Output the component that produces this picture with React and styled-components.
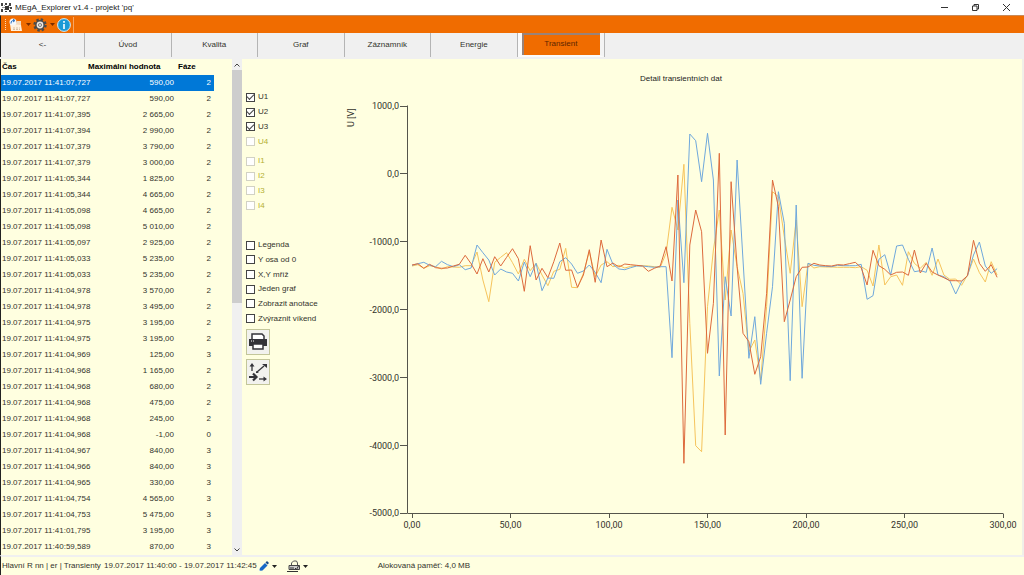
import React, { useState } from 'react';
import styled, { createGlobalStyle } from 'styled-components';

const GlobalStyle = createGlobalStyle`
    * {
        box-sizing: border-box;
    }

    body {
        margin: 0;
        background: #ffffe0;
        color: #33332c;
        font: 8px/16px 'Liberation Sans', sans-serif;
    }

    button, input {
        margin: 0;
        padding: 0;
        font: inherit;
        color: inherit;
    }

    svg {
        display: block;
    }
`

const Window = styled.div`
    display: flex;
    flex-direction: column;
    min-height: 100vh;
`

const TitleBar = styled.header`
    display: flex;
    align-items: center;
    height: 15px;
    padding: 0 2px 0 1px;
    background: #fff;

    h1 {
        flex: 1;
        margin: 0 0 0 3px;
        font-size: 8px;
        font-weight: normal;
        line-height: 15px;
        color: #222;
    }
`

const WindowButton = styled.button`
    display: flex;
    align-items: center;
    justify-content: center;
    width: 31px;
    height: 15px;
    border: 0;
    background: none;
`

const ToolBar = styled.div`
    display: flex;
    align-items: center;
    height: 18px;
    padding-left: 4px;
    border-top: 1px solid #c98a58;
    border-left: 1px solid #222;
    background: #f06c00;
`

const Grip = styled.span`
    height: 11px;
    margin-right: 3px;
    border-left: 1px dotted #ffd9b5;
`

const ToolButton = styled.button`
    display: flex;
    align-items: center;
    gap: 3px;
    margin-right: 2px;
    border: 0;
    background: none;
`

const ToolEnd = styled.span`
    height: 16px;
    border-left: 1px solid #f7a562;
`

const TabBar = styled.div`
    height: 26px;
    background: #f0f0f0;
`

const Tabs = styled.nav`
    display: grid;
    grid-template-columns: 84px repeat(6, 1fr);
    width: 59%;
    height: 24px;
    border-left: 1px solid #222;
`

const Tab = styled.button`
    border: 0;
    border-right: 1px solid #b4b4b4;
    background: #f0f0f0;

    &[aria-current='page'] {
        border: 4px solid #fafafa;
        border-width: 0 4px 2px 4px;
        border-right: 4px solid #f4f4f4;
        background: #f06c00;
        box-shadow: inset 2px 2px 0 #98837a, 1px 0 0 #b4b4b4;
        color: #5c2500;
    }
`

const Content = styled.main`
    display: flex;
    flex: 1;
    border-left: 1px solid #222;
    border-right: 2px solid #f0f0e8;
`

const ListPane = styled.section`
    display: flex;
    justify-content: space-between;
    width: 241px;
`

const Records = styled.table`
    width: 213px;
    table-layout: fixed;
    border-collapse: collapse;
    align-self: flex-start;

    th, td {
        height: 16px;
        padding: 0 3px 0 1px;
        text-align: right;
        line-height: 16px;
        white-space: nowrap;
    }

    th {
        padding-right: 0;
        text-align: left;
        color: #000;
    }

    td:first-child {
        padding-right: 0;
        text-align: left;
    }
`

const Row = styled.tr`
    background: ${props => props.$selected ? '#0078d7' : 'transparent'};
    color: ${props => props.$selected ? '#fff' : 'inherit'};
`

const ScrollBar = styled.div`
    display: flex;
    flex-direction: column;
    align-items: center;
    width: 10px;
    background: #f0f0f0;

    svg {
        margin: 4px 0 3px;
    }
`

const Thumb = styled.div`
    width: 100%;
    height: 47%;
    background: #cdcdcd;
`

const Spacer = styled.div`
    flex: 1;
`

const Options = styled.aside`
    width: 78px;
    padding: 31px 0 0 4px;
`

const CheckGroup = styled.fieldset`
    display: grid;
    grid-auto-rows: 1fr;
    height: ${props => props.$height}px;
    margin: 0 0 ${props => props.$gap}px;
    padding: 0;
    border: 0;
`

const Check = styled.label`
    display: flex;
    align-items: center;
    gap: 3px;
    white-space: nowrap;
    line-height: 12px;
    color: ${props => props.$off ? '#b5b032' : 'inherit'};

    input {
        display: grid;
        place-items: center;
        appearance: none;
        width: 9px;
        height: 9px;
        border: 1px solid ${props => props.$off ? '#d2d2c4' : '#444'};
        background: #fff;
    }

    input:checked::after {
        content: '';
        width: 6px;
        height: 3px;
        border: solid #444;
        border-width: 0 0 1px 1px;
        transform: translateY(-1px) rotate(-45deg);
    }
`

const IconButton = styled.button`
    display: flex;
    align-items: center;
    justify-content: center;
    width: 24px;
    height: 26px;
    margin-bottom: 4px;
    border: 1px solid #c3c69a;
    background: #f2f2ee;
`

const Plot = styled.section`
    flex: 1;
    min-width: 0;

    svg {
        width: 100%;
        height: auto;
    }

    .label {
        font-family: Roboto, 'Liberation Sans', sans-serif;
        font-size: 9px;
        fill: #33332c;
    }

    .title {
        font-size: 8px;
        fill: #22221c;
    }

    .axis {
        fill: none;
        stroke: #55554c;
    }
`

const StatusBar = styled.footer`
    display: flex;
    align-items: center;
    height: 20px;
    padding-left: 1px;
    border-top: 2px solid #f0f0f0;
    border-left: 1px solid #222;
    line-height: 18px;
    white-space: nowrap;
`

const Place = styled.span`
    min-width: 100px;
    margin-right: 2px;
`

const StatusButton = styled.button`
    display: flex;
    align-items: center;
    gap: 3px;
    margin-left: ${props => props.$gap}px;
    border: 0;
    background: none;
`

const Memory = styled.span`
    margin-left: 70px;
`

const tabs = ['<-', 'Úvod', 'Kvalita', 'Graf', 'Záznamník', 'Energie', 'Transient'];

const records = [
    ['11:41:07,727', '590,00', 2],
    ['11:41:07,727', '590,00', 2],
    ['11:41:07,395', '2 665,00', 2],
    ['11:41:07,394', '2 990,00', 2],
    ['11:41:07,379', '3 790,00', 2],
    ['11:41:07,379', '3 000,00', 2],
    ['11:41:05,344', '1 825,00', 2],
    ['11:41:05,344', '4 665,00', 2],
    ['11:41:05,098', '4 665,00', 2],
    ['11:41:05,098', '5 010,00', 2],
    ['11:41:05,097', '2 925,00', 2],
    ['11:41:05,033', '5 235,00', 2],
    ['11:41:05,033', '5 235,00', 2],
    ['11:41:04,978', '3 570,00', 2],
    ['11:41:04,978', '3 495,00', 2],
    ['11:41:04,975', '3 195,00', 2],
    ['11:41:04,975', '3 195,00', 2],
    ['11:41:04,969', '125,00', 3],
    ['11:41:04,968', '1 165,00', 2],
    ['11:41:04,968', '680,00', 2],
    ['11:41:04,968', '475,00', 2],
    ['11:41:04,968', '245,00', 2],
    ['11:41:04,968', '-1,00', 0],
    ['11:41:04,967', '840,00', 3],
    ['11:41:04,966', '840,00', 3],
    ['11:41:04,965', '330,00', 3],
    ['11:41:04,754', '4 565,00', 3],
    ['11:41:04,753', '5 475,00', 3],
    ['11:41:01,795', '3 195,00', 3],
    ['11:40:59,589', '870,00', 3],
];

// samples are 3 ms apart, each one in thirds of a drawing unit below y = 171
const traces = [
    {
        name: 'U3',
        color: '#f6c45c',
        samples: [
            108, 104, 115, 107, 110, 117, 110, 111, 112, 107, 107, 66, 150, 215, 97, 82, 68, 98, 132, 88,
            122, 100, 135, 167, 124, 118, 55, 172, 173, 130, 65, 140, 105, 95, 110, 106, 114, 109, 107, 107,
            108, 110, 112, 70, -68, 0, -197, 280, 647, 665, 230, 60, -60, 210, 0, 110, 190, 365, 330, 450,
            230, -115, -100, 20, 130, -30, 230, 100, 114, 110, 111, 111, 112, 112, 112, 113, 110, 121, 168, 45,
            165, 140, 135, 166, 65, 100, 115, 97, 136, 87, 135, 148, 147, 166, 135, 87, 128, 156, 95, 135,
        ],
    },
    {
        name: 'U1',
        color: '#6fa8dc',
        samples: [
            106, 101, 97, 106, 110, 94, 104, 110, 104, 119, 114, 45, 68, 90, 135, 117, 126, 130, 153, 96,
            140, 100, 182, 144, 145, 95, 83, 102, 130, 123, 105, 127, 158, 58, 103, 117, 119, 113, 108, 108,
            110, 112, 110, 110, 383, -90, 158, -288, -268, -145, -290, -150, 438, 140, 258, -210, 90, 385, 260, 463,
            310, 170, -115, -20, 452, -75, 445, 100, 106, 108, 109, 110, 106, 107, 107, 107, 103, 208, 197, 88,
            74, 135, 48, 45, 88, 125, 122, 127, 54, 135, 140, 152, 192, 155, 137, 75, 36, 108, 130, 116,
        ],
    },
    {
        name: 'U2',
        color: '#dd6a3c',
        samples: [
            105, 101, 115, 103, 113, 115, 114, 108, 103, 76, 101, 132, 86, 126, 80, 108, 82, 56, 86, 184,
            47, 150, 115, 143, 95, 39, 121, 120, 172, 135, 59, 157, 30, 110, 99, 111, 102, 104, 106, 108,
            124, 115, 108, 50, 153, -165, 700, 45, -60, 5, 370, 220, -230, 615, -145, 110, 310, 335, 433, 380,
            190, -150, -70, 275, 210, 140, 112, 111, 100, 105, 107, 108, 104, 105, 101, 97, 113, 165, 61, 107,
            118, 135, 127, 126, 136, 60, 129, 100, 126, 135, 143, 152, 152, 153, 137, 31, 100, 124, 104, 142,
        ],
    },
];

const yLabels = ['1000,0', '0,0', '-1000,0', '-2000,0', '-3000,0', '-4000,0', '-5000,0'];
const xLabels = ['0,00', '50,00', '100,00', '150,00', '200,00', '250,00', '300,00'];

const yTick = index => 47 + index * 67.9;
const xTick = index => 92 + index * 98.5;

const toPoints = samples => samples
    .map((sample, index) => `${(92 + index * 5.91).toFixed(1)},${(171 + sample / 3).toFixed(1)}`)
    .join(' ');

const Caret = ({ color = '#222' }) => (
    <svg width="5" height="3" viewBox="0 0 5 3" aria-hidden="true"><path d="M0 0h5L2.5 3z" fill={color} /></svg>
)

const AppLogo = () => (
    <svg width="11" height="11" viewBox="0 0 11 11" aria-hidden="true">
        <path d="M1 5.500h9M3 3l5 5M8 3L3 8" stroke="#999" />
        <rect x="4" y="4" width="4" height="4" fill="#333" />
        <path d="M0 1h2v3H0zM0 7h2v3H0zM4 1h2v2H4zM8 1h2v3H8zM9 5h2v2H9zM8 8h2v2H8zM4 9h2v1H4z" fill="#444" />
    </svg>
)

const OpenIcon = () => (
    <svg width="14" height="14" viewBox="0 0 14 14" aria-hidden="true">
        <path d="M2 5h5l1-2h4v10H3z" fill="#f3d9bd" />
        <path d="M1 6l11 1 1 6H2z" fill="#fff1df" />
        <path d="M4 10h7M4 11.500h7" stroke="#d6bfa5" strokeDasharray="2 1" />
        <circle cx="4" cy="4" r="3.500" fill="#f4f8fc" />
        <path d="M2 5.500c0-2.500 1-3 3-3M4 1l2 1.500L4 4" fill="none" stroke="#2a6fc0" />
    </svg>
)

const GearIcon = () => (
    <svg width="14" height="14" viewBox="0 0 14 14" aria-hidden="true">
        <circle cx="7" cy="7" r="5.500" fill="none" stroke="#4a4a4a" strokeWidth="2.400" strokeDasharray="2.400 1.920" />
        <circle cx="7" cy="7" r="4.900" fill="#4a4a4a" />
        <circle cx="7" cy="7" r="3.400" fill="#eee6de" />
        <circle cx="7" cy="7" r="1.800" fill="#4a4a4a" />
        <circle cx="7" cy="7" r="1.100" fill="#eee" />
    </svg>
)

const InfoIcon = () => (
    <svg width="14" height="14" viewBox="0 0 14 14" aria-hidden="true">
        <circle cx="7" cy="7" r="6.400" fill="#1c9ad6" stroke="#d8eaf4" />
        <path d="M7 3v1.700M7 6v5" stroke="#fff" strokeWidth="1.600" />
    </svg>
)

const PrinterIcon = () => (
    <svg width="20" height="18" viewBox="0 0 20 18" aria-hidden="true">
        <path d="M4 6V1h10l2 2v3" fill="#fff" stroke="#333338" strokeWidth="1.500" />
        <path d="M1 6h18v7H1z" fill="#333338" />
        <path d="M5 11h10v5H5z" fill="#fff" stroke="#333338" strokeWidth="1.500" />
        <path d="M3 8h1M5 8h1" stroke="#fff" />
    </svg>
)

const AxesIcon = () => (
    <svg width="20" height="20" viewBox="0 0 20 20" aria-hidden="true">
        <g fill="none" stroke="#333338" strokeWidth="1.300">
            <path d="M4 9V3" />
            <path d="M9 10l7-6" />
            <path d="M11 17h6" />
            <path d="M1 15h7M5 11.500L8.500 15 5 18.500" strokeWidth="2.200" />
        </g>
        <path d="M4 1l2.500 3.500h-5zM19 17l-3.500 2.500v-5zM14 2h5v4zM8 9v2h3z" fill="#333338" />
    </svg>
)

const PencilIcon = () => (
    <svg width="10" height="10" viewBox="0 0 10 10" aria-hidden="true">
        <path d="M0 10l1-3 5-5 2.500 2.500-5 5z" fill="#1769c7" />
        <path d="M6.500 1.500L8 0l2 2-1.500 1.500z" fill="#174a85" />
        <path d="M0 10l.500-1.500 1 1z" fill="#fff" />
    </svg>
)

const DeviceIcon = () => (
    <svg width="13" height="12" viewBox="0 0 13 12" aria-hidden="true">
        <path d="M4.500 5V3l2-2h3l1 2v2" fill="none" stroke="#555" />
        <path d="M2 5.500h10.500v4H2z" fill="#ccc" stroke="#444" />
        <path d="M0 11.500h11" stroke="#333" />
        <path d="M3 8h4M8 8l1.500 1.500L12 5" fill="none" stroke="#333" />
    </svg>
)

const CheckBox = ({ label, checked = false, disabled = false }) => (
    <Check $off={disabled}>
        <input type="checkbox" defaultChecked={checked} disabled={disabled} />
        {label}
    </Check>
)

const Header = () => (
    <>
        <TitleBar>
            <AppLogo />
            <h1>MEgA_Explorer v1.4 - projekt 'pq'</h1>
            <WindowButton aria-label="Minimalizovat">
                <svg width="7" height="7" viewBox="0 0 7 7"><path d="M0 3.500h7" stroke="#333" /></svg>
            </WindowButton>
            <WindowButton aria-label="Obnovit">
                <svg width="7" height="7" viewBox="0 0 7 7">
                    <path d="M.500 2v4.500H5V2zM2 2V.500h4.500v4.500H5" fill="none" stroke="#333" />
                </svg>
            </WindowButton>
            <WindowButton aria-label="Zavřít">
                <svg width="7" height="7" viewBox="0 0 7 7"><path d="M0 0l7 7M7 0L0 7" stroke="#333" /></svg>
            </WindowButton>
        </TitleBar>
        <ToolBar>
            <Grip />
            <ToolButton aria-label="Otevřít"><OpenIcon /><Caret color="#7a2d00" /></ToolButton>
            <ToolButton aria-label="Nastavení"><GearIcon /><Caret color="#7a2d00" /></ToolButton>
            <ToolButton aria-label="Informace"><InfoIcon /></ToolButton>
            <ToolEnd />
        </ToolBar>
        <TabBar>
            <Tabs>
                {tabs.map(tab => (
                    <Tab key={tab} aria-current={tab === 'Transient' ? 'page' : undefined}>{tab}</Tab>
                ))}
            </Tabs>
        </TabBar>
    </>
)

const RecordList = () => {
    const [selected, setSelected] = useState(0);

    return (
        <ListPane>
            <Records>
                <colgroup>
                    <col width="86" />
                    <col width="90" />
                    <col width="37" />
                </colgroup>
                <thead>
                    <tr><th>Čas</th><th>Maximální hodnota</th><th>Fáze</th></tr>
                </thead>
                <tbody>
                    {records.map(([time, value, phase], index) => (
                        <Row key={index} $selected={index === selected} onClick={() => setSelected(index)}>
                            <td>19.07.2017 {time}</td>
                            <td>{value}</td>
                            <td>{phase}</td>
                        </Row>
                    ))}
                </tbody>
            </Records>
            <ScrollBar>
                <svg width="6" height="4" viewBox="0 0 6 4"><path d="M.500 3.500L3 1l2.500 2.500" fill="none" stroke="#444" /></svg>
                <Thumb />
                <Spacer />
                <svg width="6" height="4" viewBox="0 0 6 4"><path d="M.500.500L3 3 5.500.500" fill="none" stroke="#444" /></svg>
            </ScrollBar>
        </ListPane>
    )
}

const ChartOptions = () => (
    <Options>
        <CheckGroup $height={59} $gap={5}>
            <CheckBox label="U1" checked />
            <CheckBox label="U2" checked />
            <CheckBox label="U3" checked />
            <CheckBox label="U4" disabled />
        </CheckGroup>
        <CheckGroup $height={59} $gap={25}>
            <CheckBox label="I1" disabled />
            <CheckBox label="I2" disabled />
            <CheckBox label="I3" disabled />
            <CheckBox label="I4" disabled />
        </CheckGroup>
        <CheckGroup $height={88} $gap={3}>
            <CheckBox label="Legenda" />
            <CheckBox label="Y osa od 0" />
            <CheckBox label="X,Y mříž" />
            <CheckBox label="Jeden graf" />
            <CheckBox label="Zobrazit anotace" />
            <CheckBox label="Zvýraznit víkend" />
        </CheckGroup>
        <IconButton aria-label="Tisk"><PrinterIcon /></IconButton>
        <IconButton aria-label="Osy"><AxesIcon /></IconButton>
    </Options>
)

const Chart = () => (
    <Plot>
        <svg viewBox="0 0 702 494" role="img" aria-label="Detail transientních dat">
            <text className="title" x="361" y="22" textAnchor="middle">Detail transientních dat</text>
            <text className="label" transform="translate(34 68) rotate(-90)">U [V]</text>
            <path className="axis" d="M87.500 46.500V454.500H683.500" />
            {yLabels.map((label, index) => (
                <g key={label}>
                    <path className="axis" d={`M80 ${Math.floor(yTick(index)) + 0.5}h7`} />
                    <text className="label" x="79" y={Math.round(yTick(index)) + 3} textAnchor="end">{label}</text>
                </g>
            ))}
            {xLabels.map((label, index) => (
                <g key={label}>
                    <path className="axis" d={`M${Math.floor(xTick(index)) + 0.5} 455v4`} />
                    <text className="label" x={xTick(index)} y="469" textAnchor="middle">{label}</text>
                </g>
            ))}
            {traces.map(trace => (
                <polyline
                    key={trace.name}
                    points={toPoints(trace.samples)}
                    fill="none"
                    stroke={trace.color}
                    strokeLinejoin="round"
                />
            ))}
        </svg>
    </Plot>
)

const App = () => (
    <>
        <GlobalStyle />
        <Window>
            <Header />
            <Content>
                <RecordList />
                <ChartOptions />
                <Chart />
            </Content>
            <StatusBar>
                <Place>Hlavní R nn | er | Transienty</Place>
                <span>19.07.2017 11:40:00 - 19.07.2017 11:42:45</span>
                <StatusButton $gap={2} aria-label="Upravit"><PencilIcon /><Caret /></StatusButton>
                <StatusButton $gap={10} aria-label="Zařízení"><DeviceIcon /><Caret /></StatusButton>
                <Memory>Alokovaná paměť: 4,0 MB</Memory>
            </StatusBar>
        </Window>
    </>
)

export default App;
